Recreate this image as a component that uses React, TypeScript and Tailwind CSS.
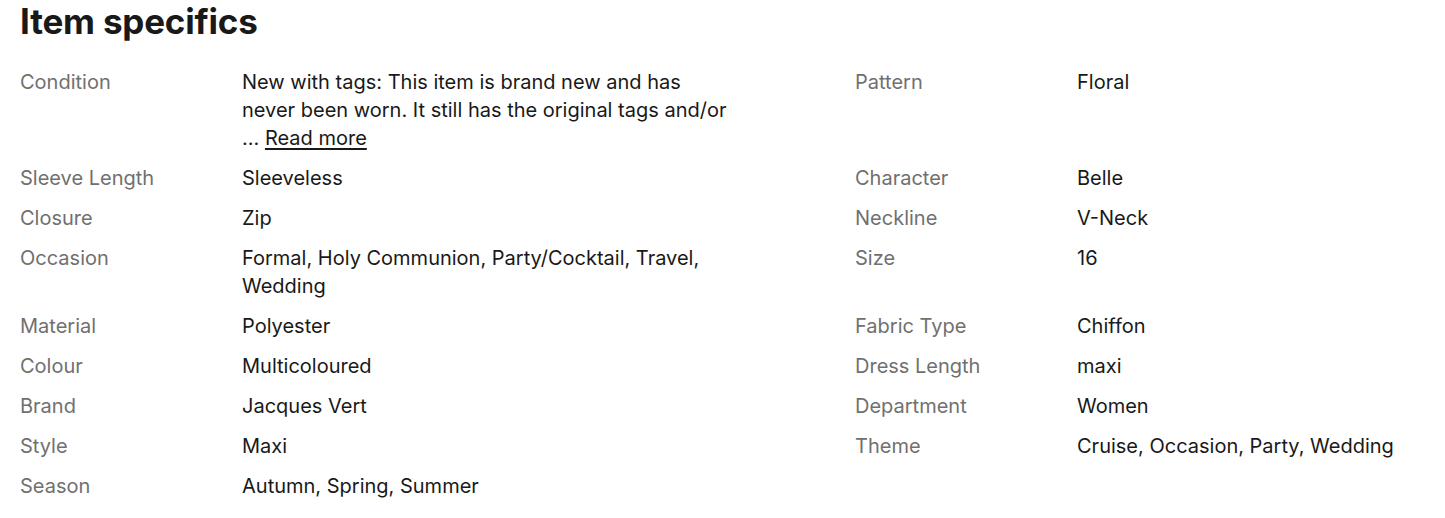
const Condition = () => (
  <>
    New with tags: This item is brand new and has never been worn. It still has the original tags and/or
    <br />
    ... <span className="underline underline-offset-[3px]">Read more</span>
  </>
);

const specs: { l: [string, React.ReactNode]; r?: [string, string] }[] = [
  { l: ["Condition", <Condition />], r: ["Pattern", "Floral"] },
  { l: ["Sleeve Length", "Sleeveless"], r: ["Character", "Belle"] },
  { l: ["Closure", "Zip"], r: ["Neckline", "V-Neck"] },
  { l: ["Occasion", "Formal, Holy Communion, Party/Cocktail, Travel, Wedding"], r: ["Size", "16"] },
  { l: ["Material", "Polyester"], r: ["Fabric Type", "Chiffon"] },
  { l: ["Colour", "Multicoloured"], r: ["Dress Length", "maxi"] },
  { l: ["Brand", "Jacques Vert"], r: ["Department", "Women"] },
  { l: ["Style", "Maxi"], r: ["Theme", "Cruise, Occasion, Party, Wedding"] },
  { l: ["Season", "Autumn, Spring, Summer"] },
];

export default function App() {
  return (
    <div className="w-[1445px] h-[518px] bg-white overflow-hidden px-5 text-[#191919] font-['Inter',sans-serif]">
      <h2 className="text-[35px] leading-[42px] font-bold tracking-[-0.2px]">Item specifics</h2>
      <div className="mt-[26px] flex flex-col gap-3 text-[20px] leading-[28px]">
        {specs.map((s, i) => (
          <div key={i} className="grid grid-cols-[222px_613px_222px_1fr]">
            <div className="text-[#707070]">{s.l[0]}</div>
            <div className="max-w-[488px]">{s.l[1]}</div>
            <div className="text-[#707070]">{s.r?.[0]}</div>
            <div>{s.r?.[1]}</div>
          </div>
        ))}
      </div>
    </div>
  );
}
